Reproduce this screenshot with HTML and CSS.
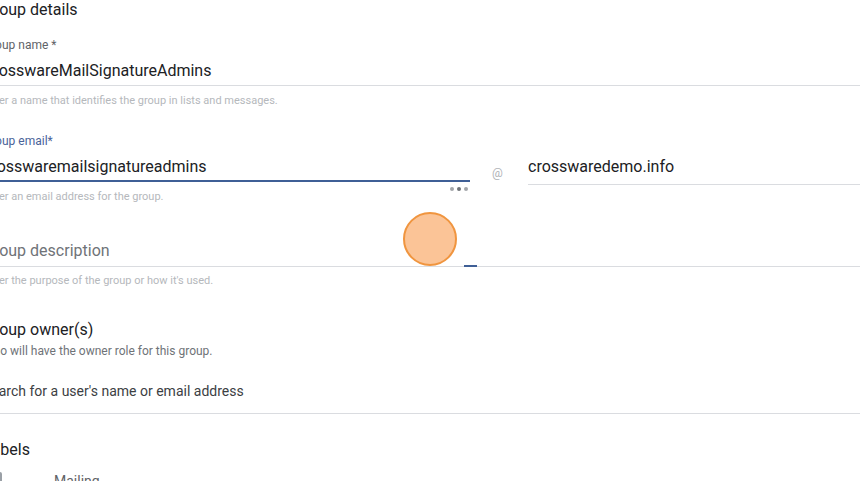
FILE: index.html
```html
<!DOCTYPE html>
<html>
<head>
<meta charset="utf-8">
<link rel="stylesheet" href="styles.css">
</head>
<body>
<div class="page">
  <h2 class="section-title">Group details</h2>

  <div class="field">
    <div class="label">Group name *</div>
    <div class="value">CrosswareMailSignatureAdmins</div>
    <div class="hint">Enter a name that identifies the group in lists and messages.</div>
  </div>

  <div class="email-row">
    <div class="field email-field">
      <div class="label focused">Group email*</div>
      <div class="value focused-line">crosswaremailsignatureadmins</div>
      <div class="dots"><span></span><span></span><span></span></div>
      <div class="hint">Enter an email address for the group.</div>
    </div>
    <div class="at">@</div>
    <div class="domain">crosswaredemo.info</div>
  </div>

  <div class="field desc-field">
    <div class="value placeholder">Group description<span class="blue-dash"></span></div>
    <div class="hint desc-hint">Enter the purpose of the group or how it's used.</div>
    <div class="cursor-dot"></div>
  </div>

  <div class="owners">
    <div class="owners-title">Group owner(s)</div>
    <div class="owners-sub">Who will have the owner role for this group.</div>
    <div class="search">Search for a user's name or email address</div>
  </div>

  <div class="labels">
    <div class="labels-title">Labels</div>
    <div class="check-row"><span class="checkbox"></span><span class="check-text">Mailing</span></div>
  </div>
</div>
</body>
</html>
```
FILE: styles.css
```css
html, body { margin: 0; padding: 0; background: #fff; }
body { font-family: Roboto, "Noto Sans", sans-serif; overflow: hidden; width: 860px; height: 481px; }
.page { margin-left: -17px; width: 877px; }
.section-title { margin: 0; font-weight: 400; font-size: 16px; line-height: 20px; color: #202124; }
.field { position: relative; }
.label { font-size: 12px; line-height: 16px; color: #5f6368; margin-top: 17px; }
.label.focused { color: #4a6399; margin-top: 25px; }
.value { font-size: 16px; line-height: 22px; color: #202124; padding: 7px 0 3px; border-bottom: 1px solid #dadce0; }
.value.focused-line { border-bottom: 2px solid #3f5f96; padding-bottom: 2px; }
.hint { font-size: 11px; line-height: 14px; color: #b5b8bc; margin-top: 8px; }
.email-row { display: flex; align-items: flex-start; }
.email-field { width: 487px; flex: none; }
.dots { position: absolute; left: 467px; top: 79px; display: flex; gap: 3px; }
.dots span { width: 4px; height: 4px; border-radius: 50%; background: #6f7378; }
.dots span:first-child, .dots span:last-child { background: #a3a6aa; }
.at { font-size: 12px; line-height: 14px; color: #b0b3b7; margin: 58px 0 0 22px; width: 24px; }
.domain { flex: 1; margin: 41px 0 0 12px; font-size: 16px; line-height: 22px; color: #202124; padding: 7px 0 6px; border-bottom: 1px solid #dadce0; }
.desc-field { margin-top: 29px; }
.placeholder { color: #6f7378; position: relative; padding-bottom: 4px; }
.desc-hint { margin-top: 7px; }
.blue-dash { position: absolute; left: 481px; bottom: -1px; width: 13px; height: 2px; background: #3f5f96; }
.cursor-dot { position: absolute; left: 420px; top: -21px; width: 50px; height: 50px; border-radius: 50%; background: #fbc497; border: 2px solid #f0953f; }
.owners { margin-top: 32px; }
.owners-title { font-size: 16px; line-height: 20px; color: #202124; }
.owners-sub { font-size: 12px; line-height: 16px; color: #6f7378; margin-top: 3px; }
.search { font-size: 14px; line-height: 20px; color: #3c4043; padding: 22px 0 12px; border-bottom: 1px solid #dadce0; }
.labels { margin-top: 26px; }
.labels-title { font-size: 16px; line-height: 20px; color: #202124; }
.check-row { display: flex; align-items: flex-start; margin-top: 12px; }
.checkbox { width: 14px; height: 14px; border: 2px solid #9aa0a6; border-radius: 2px; background: #c8cacc; margin-left: 1px; }
.check-text { margin-left: 52px; font-size: 14px; line-height: 18px; color: #5f6368; }
```
